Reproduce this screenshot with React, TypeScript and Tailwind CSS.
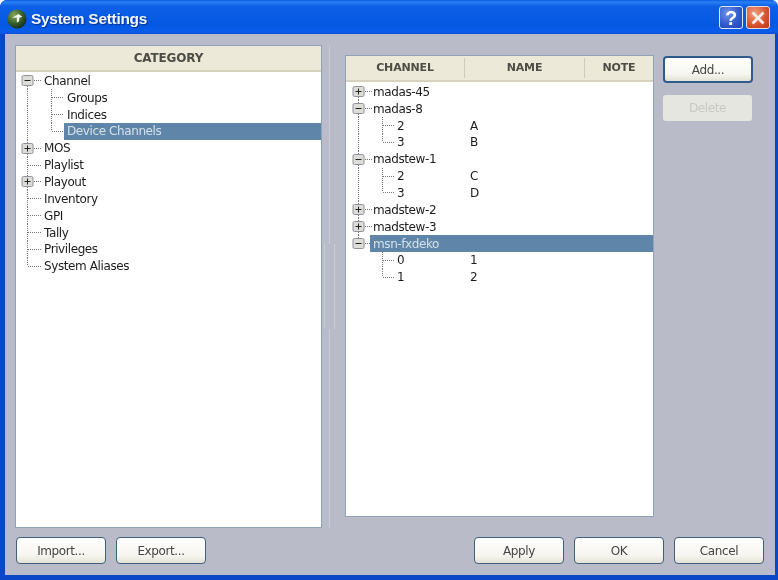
import React from "react";

type RowT = { label: string; name?: string; level: 0 | 1; exp?: "+" | "-"; first?: boolean; last?: boolean; rootLine?: boolean; childLast?: boolean; sel?: boolean };

function Guide({ r, cx, childX, w }: { r: RowT; cx: number; childX: number; w: number }) {
  const dots = { stroke: "#777", strokeWidth: 1, strokeDasharray: "1 1", fill: "none" } as const;
  return (
    <svg width={w} height={17} className="shrink-0 overflow-visible">
      {r.level === 0 ? (
        <>
          <line x1={cx + 0.5} x2={cx + 0.5} y1={r.first ? 8 : 0} y2={r.last ? 8 : 17} {...dots} />
          <line x1={cx + 1} x2={cx + 15} y1={8.5} y2={8.5} {...dots} />
          {r.exp && (
            <g>
              <rect x={cx - 5} y={3.5} width={11} height={10} rx={1.5} fill="#dcdcd8" stroke="#8f9298" />
              <line x1={cx - 2.5} x2={cx + 3.5} y1={8.5} y2={8.5} stroke="#222" />
              {r.exp === "+" && <line x1={cx + 0.5} x2={cx + 0.5} y1={5.5} y2={11.5} stroke="#222" />}
            </g>
          )}
        </>
      ) : (
        <>
          {r.rootLine && <line x1={cx + 0.5} x2={cx + 0.5} y1={0} y2={17} {...dots} />}
          <line x1={childX + 0.5} x2={childX + 0.5} y1={0} y2={r.childLast ? 8 : 17} {...dots} />
          <line x1={childX + 1} x2={childX + 12} y1={8.5} y2={8.5} {...dots} />
        </>
      )}
    </svg>
  );
}

function Row({ r, cx, childX, rootW, childW, nameOffset }: { r: RowT; cx: number; childX: number; rootW: number; childW: number; nameOffset?: number }) {
  const w = r.level === 0 ? rootW : childW;
  return (
    <div className="flex h-[16.85px] items-center">
      <Guide r={r} cx={cx} childX={childX} w={w} />
      <div className={`flex h-[16.85px] flex-1 items-center pl-[3px] ${r.sel ? "bg-[#5f86a9] text-[#d5e1ea]" : "text-[#1c1c1c]"}`}>
        <span className="shrink-0" style={nameOffset ? { width: nameOffset - w } : undefined}>{r.label}</span>
        {r.name && <span>{r.name}</span>}
      </div>
    </div>
  );
}

function Btn({ children, def, disabled, w = "w-[90px]" }: { children: React.ReactNode; def?: boolean; disabled?: boolean; w?: string }) {
  if (disabled)
    return <div className={`flex h-[26px] ${w} items-center justify-center rounded-[3px] bg-[#e6e6e0] text-[#c9c9c4]`}>{children}</div>;
  return (
    <div className={`flex h-[27px] ${w} items-center justify-center rounded-[4px] border text-[#454545] bg-[linear-gradient(180deg,#ffffff,#f6f5ef_70%,#e4e2d6)] ${def ? "border-2 border-[#2f5a8c]" : "border-[#41607c]"}`}>
      {children}
    </div>
  );
}

const left: RowT[] = [
  { label: "Channel", level: 0, exp: "-", first: true },
  { label: "Groups", level: 1, rootLine: true },
  { label: "Indices", level: 1, rootLine: true },
  { label: "Device Channels", level: 1, rootLine: true, childLast: true, sel: true },
  { label: "MOS", level: 0, exp: "+" },
  { label: "Playlist", level: 0 },
  { label: "Playout", level: 0, exp: "+" },
  { label: "Inventory", level: 0 },
  { label: "GPI", level: 0 },
  { label: "Tally", level: 0 },
  { label: "Privileges", level: 0 },
  { label: "System Aliases", level: 0, last: true },
];

const right: RowT[] = [
  { label: "madas-45", level: 0, exp: "+", first: true },
  { label: "madas-8", level: 0, exp: "-" },
  { label: "2", name: "A", level: 1, rootLine: true },
  { label: "3", name: "B", level: 1, rootLine: true, childLast: true },
  { label: "madstew-1", level: 0, exp: "-" },
  { label: "2", name: "C", level: 1, rootLine: true },
  { label: "3", name: "D", level: 1, rootLine: true, childLast: true },
  { label: "madstew-2", level: 0, exp: "+" },
  { label: "madstew-3", level: 0, exp: "+" },
  { label: "msn-fxdeko", level: 0, exp: "-", last: true, sel: true },
  { label: "0", name: "1", level: 1 },
  { label: "1", name: "2", level: 1, childLast: true },
];

export default function App() {
  return (
    <div className="flex h-[580px] w-[778px] flex-col overflow-hidden rounded-t-[7px] bg-[#0b46c8] text-[12px] tracking-[-0.4px] [font-family:'DejaVu_Sans',sans-serif] blur-[0.35px]">
      <div className="flex h-[34px] items-center bg-[linear-gradient(180deg,#0a5ce0,#2a80f4_6%,#0d60e6_18%,#0558e2_75%,#0a5cec_92%,#0a52d8)] pl-[7px] pr-[8px] pt-[4px]">
        <svg width="20" height="20" viewBox="0 0 20 20" className="shrink-0">
          <defs>
            <radialGradient id="g" cx="0.35" cy="0.3" r="0.8">
              <stop offset="0" stopColor="#8aa85a" />
              <stop offset="0.55" stopColor="#35602a" />
              <stop offset="1" stopColor="#14240f" />
            </radialGradient>
          </defs>
          <circle cx="10" cy="10" r="9.5" fill="url(#g)" />
          <path d="M5 9 L11.5 5 L15.5 8 L12.5 8.5 L12 12.5 L9.8 13.5 L9.8 8.5 Z" fill="#f4f6ee" />
        </svg>
        <span className="ml-[4px] text-[15.5px] font-bold tracking-[-0.3px] text-[#f2f6ff] [font-family:'Liberation_Sans',sans-serif] [text-shadow:1px_1px_1px_#0a2f90]">System Settings</span>
        <div className="ml-auto -mt-[3px] flex gap-[3px]">
          <div className="flex h-[23px] w-[24px] items-center justify-center rounded-[3px] border border-[#dfe8fa] bg-[radial-gradient(circle_at_35%_30%,#6f94ea,#2f55c8_60%,#2446b4)] text-[20px] font-bold text-white [font-family:'Liberation_Sans',sans-serif]">?</div>
          <div className="flex h-[23px] w-[24px] items-center justify-center rounded-[3px] border border-[#f0dcd4] bg-[radial-gradient(circle_at_35%_30%,#f0a080,#d5502e_60%,#b83618)]">
            <svg width="16" height="16" viewBox="0 0 16 16"><path d="M2.5 2.5 L13.5 13.5 M13.5 2.5 L2.5 13.5" stroke="#fbeee8" strokeWidth="2.8" /></svg>
          </div>
        </div>
      </div>

      <div className="ml-[5px] mr-[3px] mb-[5px] flex flex-1 flex-col bg-[#b9bcc8] pb-[11px] pl-[10px] pr-[11px] pt-[11px]">
        <div className="flex h-[483px]">
          <div className="flex w-[307px] flex-col border border-[#8fa3b5] bg-white">
            <div className="flex h-[26px] shrink-0 items-center justify-center border-b-2 border-[#d6d2bd] bg-[#ece9d8] text-[12px] font-bold tracking-[-0.15px] text-[#4d4d45]">CATEGORY</div>
            <div className="pt-[0.5px]">
              {left.map((r, i) => <Row key={i} r={r} cx={11} childX={35} rootW={25} childW={48} />)}
            </div>
          </div>

          <div className="flex w-[23px] flex-col pl-[2px]">
            <div className="ml-[5px] w-px flex-1 bg-[#c8cad4]" />
            <div className="h-[85px] w-[11px] border-x border-[#c8cad4]" />
            <div className="ml-[5px] w-px flex-1 bg-[#c8cad4]" />
          </div>

          <div className="mt-[10px] mb-[11px] flex w-[309px] flex-col border border-[#8fa3b5] bg-white">
            <div className="flex h-[26px] shrink-0 items-center border-b-2 border-[#d6d2bd] bg-[#ece9d8] text-[11px] font-bold tracking-[-0.15px] text-[#4d4d45]">
              <div className="flex h-[20px] w-[119px] items-center justify-center border-r border-[#d0ccb8]">CHANNEL</div>
              <div className="flex h-[20px] w-[120px] items-center justify-center border-r border-[#d0ccb8]">NAME</div>
              <div className="flex h-[20px] flex-1 items-center justify-center">NOTE</div>
            </div>
            <div className="pt-[1.5px]">
              {right.map((r, i) => <Row key={i} r={r} cx={12} childX={36} rootW={24} childW={48} nameOffset={121} />)}
            </div>
          </div>

          <div className="ml-[9px] mt-[11px] flex flex-col gap-[12px]">
            <Btn def>Add...</Btn>
            <Btn disabled w="w-[89px]">Delete</Btn>
          </div>
        </div>

        <div className="mt-[9px] flex gap-[10px] pl-px">
          <Btn>Import...</Btn>
          <Btn>Export...</Btn>
          <div className="ml-auto flex gap-[10px]">
            <Btn>Apply</Btn>
            <Btn>OK</Btn>
            <Btn>Cancel</Btn>
          </div>
        </div>
      </div>
    </div>
  );
}
